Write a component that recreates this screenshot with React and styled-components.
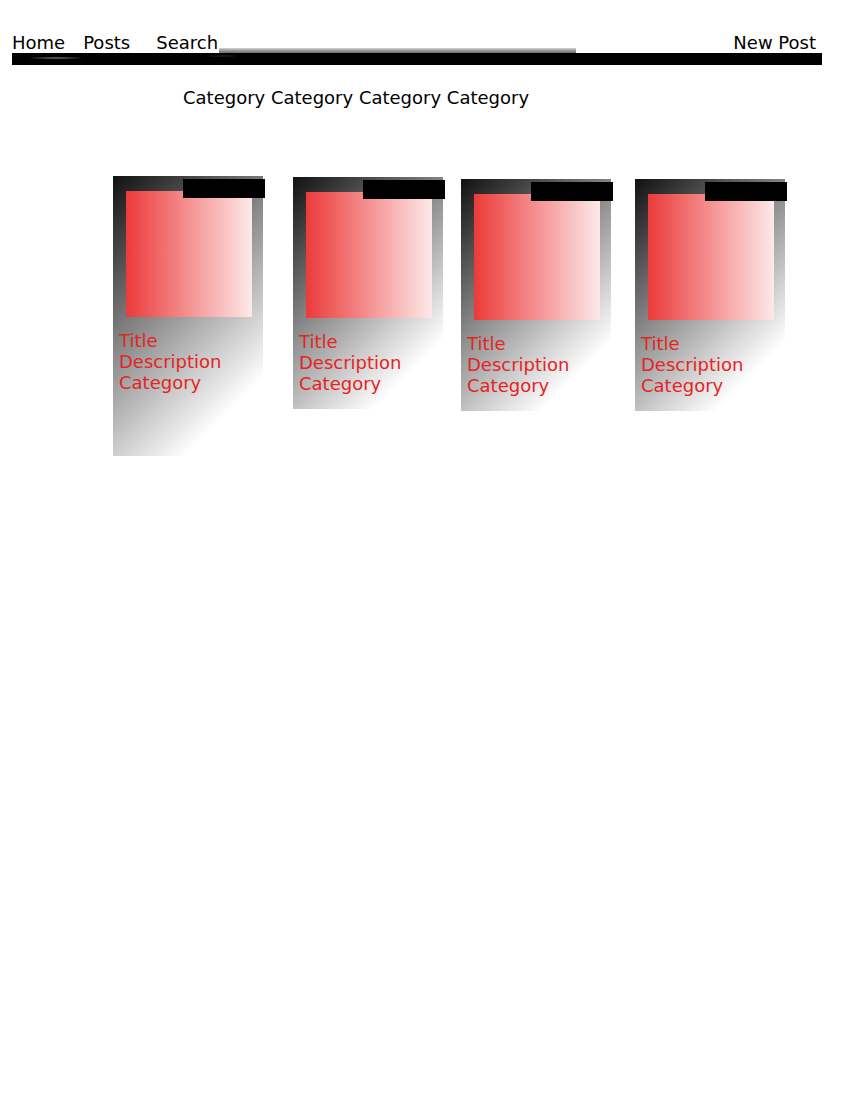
import React from "react";
import styled, { createGlobalStyle } from "styled-components";

const Global = createGlobalStyle`
  html, body { margin: 0; padding: 0; background: #fff; }
  body { font-family: "DejaVu Sans", "Liberation Sans", sans-serif; font-size: 18px; color: #000; }
`;

const Page = styled.div`
  padding-top: 32px;
`;

const Nav = styled.nav`
  display: flex;
  align-items: flex-end;
  margin-left: 12px;
  width: 810px;
  line-height: 21px;
`;

const NavLink = styled.a`
  color: #000;
  text-decoration: none;
  margin-left: ${(p) => p.$ml || 0}px;
  margin-right: ${(p) => p.$mr || 0}px;
  white-space: nowrap;
`;

const SearchInput = styled.input`
  display: block;
  border: none;
  outline: none;
  padding: 0;
  margin: 0 0 0 1px;
  width: 357px;
  height: 5px;
  background: linear-gradient(#d4d4d4, #9a9a9a 50%, #6e6e6e);
`;

const Spacer = styled.div`
  flex: 1;
`;

const Bar = styled.div`
  margin-left: 12px;
  width: 810px;
  height: 12px;
  background:
    radial-gradient(ellipse 28px 1.6px at 44px 5px, rgba(190,190,190,0.6), rgba(0,0,0,0)),
    radial-gradient(ellipse 18px 1px at 210px 3px, rgba(120,120,120,0.4), rgba(0,0,0,0)),
    #000;
`;

const CategoryBar = styled.div`
  margin: 22px 0 0 183px;
  line-height: 21px;
  white-space: nowrap;
`;

const Cards = styled.div`
  display: flex;
  align-items: flex-start;
  margin-top: 68px;
`;

const Card = styled.div`
  position: relative;
  box-sizing: border-box;
  width: 150px;
  height: ${(p) => p.$h}px;
  margin-left: ${(p) => p.$ml}px;
  margin-top: ${(p) => p.$mt}px;
  padding: 15px 0 0 13px;
  background: linear-gradient(135deg, #111 0%, #fff 82%);
`;

const Badge = styled.div`
  position: absolute;
  top: 3px;
  left: 70px;
  width: 82px;
  height: 19px;
  background: #000;
`;

const Thumb = styled.div`
  width: 126px;
  height: 126px;
  background: linear-gradient(to right, #ec3a3a, #fde9e9);
`;

const Info = styled.div`
  margin: 13px 0 0 -7px;
  color: #e52424;
  line-height: 21px;
`;

const cards = [
  { h: 280, ml: 113, mt: 0 },
  { h: 232, ml: 30, mt: 1 },
  { h: 232, ml: 18, mt: 3 },
  { h: 232, ml: 24, mt: 3 },
];

export default function App() {
  return (
    <Page>
      <Global />
      <Nav>
        <NavLink href="#">Home</NavLink>
        <NavLink href="#" $ml={18}>Posts</NavLink>
        <NavLink href="#" $ml={26}>Search</NavLink>
        <SearchInput type="text" />
        <Spacer />
        <NavLink href="#" $mr={6}>New Post</NavLink>
      </Nav>
      <Bar />
      <CategoryBar>Category Category Category Category</CategoryBar>
      <Cards>
        {cards.map((c, i) => (
          <Card key={i} $h={c.h} $ml={c.ml} $mt={c.mt}>
            <Badge />
            <Thumb />
            <Info>
              <div>Title</div>
              <div>Description</div>
              <div>Category</div>
            </Info>
          </Card>
        ))}
      </Cards>
    </Page>
  );
}
